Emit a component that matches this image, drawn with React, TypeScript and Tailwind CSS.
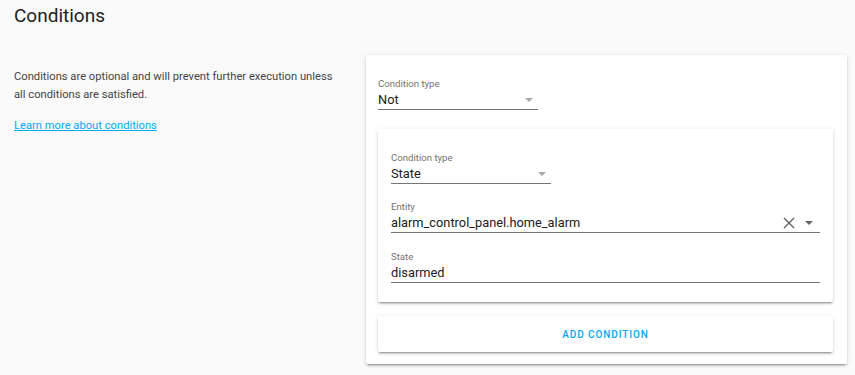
import React from "react";

const cardShadow =
  "shadow-[0_2px_2px_0_rgba(0,0,0,0.14),0_1px_5px_0_rgba(0,0,0,0.12),0_3px_1px_-2px_rgba(0,0,0,0.2)]";

function Caret({ className }: { className?: string }) {
  return (
    <svg width="8" height="4" viewBox="0 0 8 4" className={className}>
      <path d="M0 0h8L4 4z" fill="currentColor" />
    </svg>
  );
}

function Field({
  label,
  value,
  className = "",
  children,
}: {
  label: string;
  value: string;
  className?: string;
  children?: React.ReactNode;
}) {
  return (
    <div className={className}>
      <div className="text-[9.6px] leading-[12px] text-[#737373]">{label}</div>
      <div className="mt-[2px] flex items-center border-b border-[#757575] pb-[1px]">
        <span className="flex-1 text-[12.8px] leading-[16px] text-[#212121]">{value}</span>
        {children}
      </div>
    </div>
  );
}

function SelectField({ label, value, className = "" }: { label: string; value: string; className?: string }) {
  return (
    <Field label={label} value={value} className={`w-[160px] ${className}`}>
      <Caret className="mr-[5px] text-[#a8a8a8]" />
    </Field>
  );
}

export default function App() {
  return (
    <div className="min-h-[375px] bg-[#fafafa] font-['Roboto',sans-serif]">
      <h1 className="px-[14px] pt-[3px] text-[19px] leading-[26px] font-normal text-[#212121]">Conditions</h1>

      <div className="mt-[26px] flex gap-[22px] pl-[14px] pr-[8px]">
        <div className="w-[330px] pt-[13px]">
          <p className="text-[11.2px] leading-[18px] text-[#444]">
            Conditions are optional and will prevent further execution unless all conditions are satisfied.
          </p>
          <a href="#" className="mt-[13px] block text-[11.2px] leading-[18px] text-[#03a9f4] underline">
            Learn more about conditions
          </a>
        </div>

        <div className={`w-[481px] rounded-[2px] bg-white pt-[23px] pb-[12px] pl-[12px] pr-[14px] ${cardShadow}`}>
          <SelectField label="Condition type" value="Not" />

          <div className={`mt-[19px] rounded-[2px] bg-white px-[13px] pt-[23px] pb-[19px] ${cardShadow}`}>
            <SelectField label="Condition type" value="State" />
            <Field label="Entity" value="alarm_control_panel.home_alarm" className="mt-[17px]">
              <svg width="12" height="12" viewBox="0 0 12 12" className="mr-[10px] text-[#616161]">
                <path d="M1 1l10 10M11 1L1 11" stroke="currentColor" strokeWidth="1.4" fill="none" />
              </svg>
              <Caret className="mr-[7px] text-[#666]" />
            </Field>
            <Field label="State" value="disarmed" className="mt-[18px]" />
          </div>

          <div className={`mt-[14px] flex h-[36px] items-center justify-center rounded-[2px] bg-white ${cardShadow}`}>
            <span className="text-[10px] font-medium tracking-[0.9px] text-[#03a9f4]">ADD CONDITION</span>
          </div>
        </div>
      </div>
    </div>
  );
}
